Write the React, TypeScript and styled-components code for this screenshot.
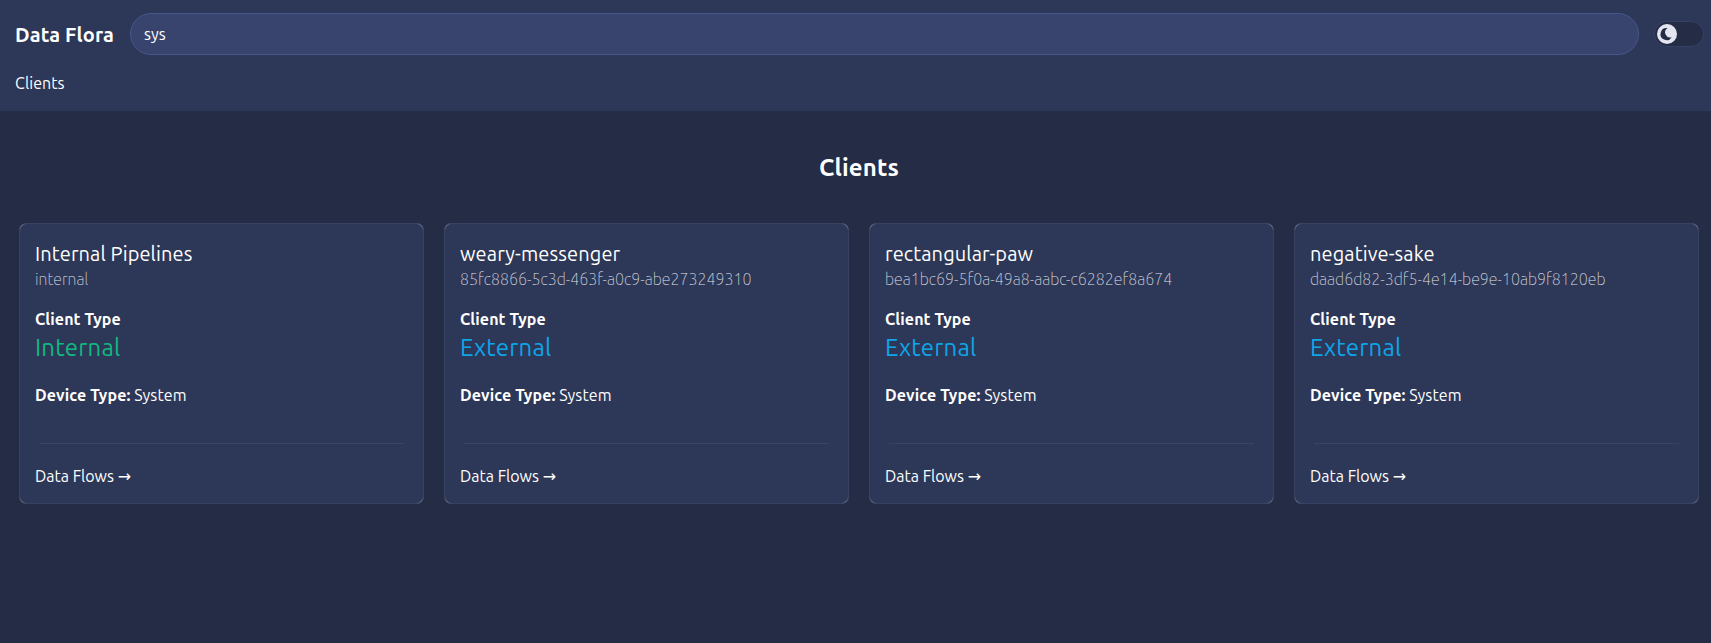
import React, { useState } from 'react';
import styled, { createGlobalStyle } from 'styled-components';

const color = {
  body: '#242c46',
  panel: '#2d3757',
  field: '#38446d',
  fieldEdge: '#47568b',
  edge: '#374162',
  corner: '#6c7289',
  text: '#ffffff',
  muted: '#e2e4ea',
  internal: '#10b981',
  external: '#0ea5e9',
};

const GlobalStyle = createGlobalStyle`
  * { box-sizing: border-box; }
  body {
    margin: 0;
    min-height: 100vh;
    background: ${color.body};
    color: ${color.text};
    font: 400 16px/24px Ubuntu, "Open Sans", "Noto Sans", sans-serif;
  }
`;

const Header = styled.header`
  height: 111px;
  padding: 13px 7px 16px 15px;
  display: flex;
  flex-direction: column;
  justify-content: space-between;
  background: ${color.panel};
`;

const TopBar = styled.div`
  display: flex;
  align-items: center;
`;

const Brand = styled.div`
  width: 115px;
  padding-top: 2px;
  flex: none;
  font-size: 20px;
  font-weight: 700;
  letter-spacing: 0.15px;
  white-space: nowrap;
`;

const Search = styled.input`
  flex: 1;
  min-width: 0;
  height: 42px;
  padding: 0 13px;
  border: 1px solid ${color.fieldEdge};
  border-radius: 21px;
  outline: none;
  background: ${color.field};
  color: ${color.text};
  font: inherit;
`;

const Toggle = styled.button`
  width: 50px;
  height: 26px;
  margin-left: 15px;
  padding: 0 2px;
  flex: none;
  display: flex;
  align-items: center;
  border: 1px solid #364166;
  border-radius: 13px;
  background: ${color.body};
`;

const Thumb = styled.span`
  width: 20px;
  height: 20px;
  display: flex;
  align-items: center;
  justify-content: center;
  border-radius: 50%;
  background: #e3e6f0;
  color: ${color.body};
`;

const Nav = styled.nav`
  letter-spacing: 0.08px;
`;

const Main = styled.main`
  padding: 38px 12px 0 19px;
`;

const Heading = styled.h1`
  margin: 0 0 36px;
  font-size: 24px;
  line-height: 38px;
  font-weight: 700;
  letter-spacing: 0.2px;
  text-align: center;
`;

const Grid = styled.div`
  display: grid;
  grid-template-columns: repeat(4, 1fr);
  gap: 20px;
`;

const cornerGlow = (at: string) =>
  `radial-gradient(circle at ${at}, ${color.corner} 3px, transparent 8px) border-box`;

const Card = styled.article`
  padding: 15px 19px 15px 15px;
  border: 1px solid transparent;
  border-radius: 8px;
  background:
    linear-gradient(${color.panel}, ${color.panel}) padding-box,
    ${cornerGlow('0 0')},
    ${cornerGlow('100% 0')},
    ${cornerGlow('0 100%')},
    ${cornerGlow('100% 100%')},
    linear-gradient(${color.edge}, ${color.edge}) border-box;
`;

const Name = styled.div`
  font-size: 20px;
  line-height: 30px;
  letter-spacing: 0.12px;
`;

const Identifier = styled.div`
  line-height: 20px;
  font-weight: 100;
  color: ${color.muted};
`;

const Label = styled.strong`
  font-weight: 700;
  letter-spacing: 0.1px;
`;

const TypeBlock = styled.div`
  margin-top: 18px;
`;

const TypeValue = styled.div<{ $internal: boolean }>`
  font-size: 24px;
  line-height: 34px;
  letter-spacing: 0.2px;
  color: ${(p) => (p.$internal ? color.internal : color.external)};
`;

const Device = styled.div`
  margin-top: 18px;
  letter-spacing: 0.1px;
`;

const Divider = styled.hr`
  height: 1px;
  margin: 36px 0 20px 4px;
  border: 0;
  background: #38436a;
`;

const FlowLink = styled.a`
  display: block;
  height: 24px;
`;

const Arrow = styled.span`
  font-family: "DejaVu Sans", sans-serif;
  line-height: 1;
`;

const MoonIcon = () => (
  <svg width="20" height="20" viewBox="0 0 20 20" fill="currentColor">
    <path d="M10.5 4.2A6 6 0 1 0 14.7 13.2A5 5 0 0 1 10.5 4.2Z" />
  </svg>
);

const clients = [
  { name: 'Internal Pipelines', id: 'internal', internal: true },
  { name: 'weary-messenger', id: '85fc8866-5c3d-463f-a0c9-abe273249310', internal: false },
  { name: 'rectangular-paw', id: 'bea1bc69-5f0a-49a8-aabc-c6282ef8a674', internal: false },
  { name: 'negative-sake', id: 'daad6d82-3df5-4e14-be9e-10ab9f8120eb', internal: false },
];

export default function App() {
  const [query, setQuery] = useState('sys');

  return (
    <>
      <GlobalStyle />
      <Header>
        <TopBar>
          <Brand>Data Flora</Brand>
          <Search value={query} onChange={(e) => setQuery(e.target.value)} />
          <Toggle type="button">
            <Thumb><MoonIcon /></Thumb>
          </Toggle>
        </TopBar>
        <Nav>Clients</Nav>
      </Header>
      <Main>
        <Heading>Clients</Heading>
        <Grid>
          {clients.map((c) => (
            <Card key={c.id}>
              <Name>{c.name}</Name>
              <Identifier>{c.id}</Identifier>
              <TypeBlock>
                <Label>Client Type</Label>
                <TypeValue $internal={c.internal}>{c.internal ? 'Internal' : 'External'}</TypeValue>
              </TypeBlock>
              <Device><Label>Device Type:</Label> System</Device>
              <Divider />
              <FlowLink>Data Flows <Arrow>→</Arrow></FlowLink>
            </Card>
          ))}
        </Grid>
      </Main>
    </>
  );
}
